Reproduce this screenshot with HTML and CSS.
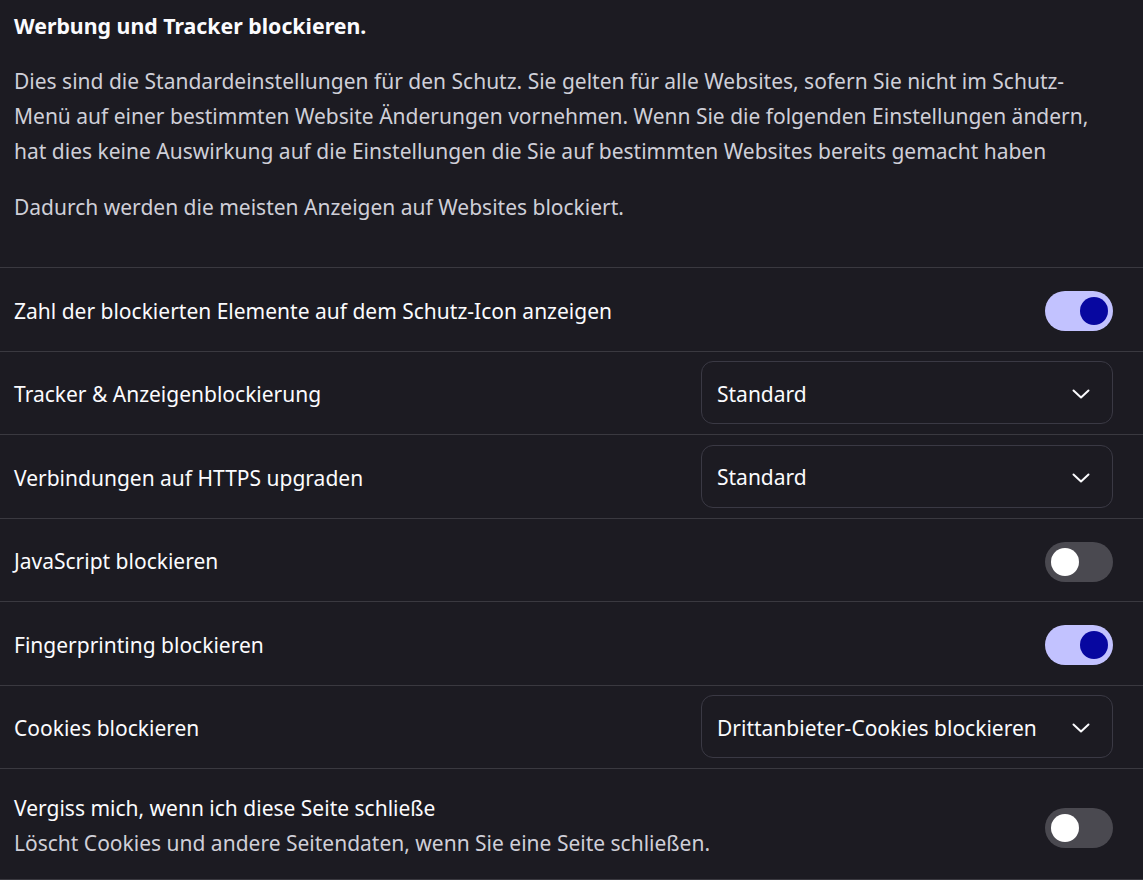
FILE: index.html
```html
<!DOCTYPE html>
<html lang="de">
<head>
<meta charset="utf-8">
<title>Schutz</title>
<link rel="stylesheet" href="styles.css">
</head>
<body>
<section class="intro">
  <h1 class="title">Werbung und Tracker blockieren.</h1>
  <p class="desc">Dies sind die Standardeinstellungen für den Schutz. Sie gelten für alle Websites, sofern Sie nicht im Schutz-<br>Menü auf einer bestimmten Website Änderungen vornehmen. Wenn Sie die folgenden Einstellungen ändern,<br>hat dies keine Auswirkung auf die Einstellungen die Sie auf bestimmten Websites bereits gemacht haben</p>
  <p class="desc">Dadurch werden die meisten Anzeigen auf Websites blockiert.</p>
</section>
<ul class="list">
  <li class="row">
    <span class="label">Zahl der blockierten Elemente auf dem Schutz-Icon anzeigen</span>
    <span class="toggle on"><span class="knob"></span></span>
  </li>
  <li class="row">
    <span class="label">Tracker &amp; Anzeigenblockierung</span>
    <span class="select"><span class="select-text">Standard</span>
      <svg class="chev" width="18" height="10" viewBox="0 0 18 10"><path d="M1.5 1.5 L9 8.5 L16.5 1.5" fill="none" stroke="#fbfbfe" stroke-width="2" stroke-linecap="round" stroke-linejoin="round"/></svg>
    </span>
  </li>
  <li class="row">
    <span class="label">Verbindungen auf HTTPS upgraden</span>
    <span class="select"><span class="select-text">Standard</span>
      <svg class="chev" width="18" height="10" viewBox="0 0 18 10"><path d="M1.5 1.5 L9 8.5 L16.5 1.5" fill="none" stroke="#fbfbfe" stroke-width="2" stroke-linecap="round" stroke-linejoin="round"/></svg>
    </span>
  </li>
  <li class="row">
    <span class="label">JavaScript blockieren</span>
    <span class="toggle"><span class="knob"></span></span>
  </li>
  <li class="row">
    <span class="label">Fingerprinting blockieren</span>
    <span class="toggle on"><span class="knob"></span></span>
  </li>
  <li class="row">
    <span class="label">Cookies blockieren</span>
    <span class="select"><span class="select-text">Drittanbieter-Cookies blockieren</span>
      <svg class="chev" width="18" height="10" viewBox="0 0 18 10"><path d="M1.5 1.5 L9 8.5 L16.5 1.5" fill="none" stroke="#fbfbfe" stroke-width="2" stroke-linecap="round" stroke-linejoin="round"/></svg>
    </span>
  </li>
  <li class="row tall">
    <span class="label-group">
      <span class="label">Vergiss mich, wenn ich diese Seite schließe</span>
      <span class="sub">Löscht Cookies und andere Seitendaten, wenn Sie eine Seite schließen.</span>
    </span>
    <span class="toggle toggle-low"><span class="knob"></span></span>
  </li>
</ul>
</body>
</html>
```

FILE: styles.css
```css
html, body {
  margin: 0;
  padding: 0;
  background: #1c1b22;
}
body {
  font-family: "Noto Sans", "Open Sans", sans-serif;
  font-size: 21px;
  line-height: 35px;
  color: #fbfbfe;
}
.intro {
  padding: 8px 30px 42px 14px;
}
.title {
  margin: 0;
  font-size: 21.3px;
  font-weight: 700;
  line-height: 35px;
}
.desc {
  margin: 21px 0 0 0;
  color: #cfcfd8;
  white-space: nowrap;
}
.list {
  list-style: none;
  margin: 0;
  padding: 0;
  border-bottom: 1px solid #3a3940;
}
.row {
  display: flex;
  align-items: center;
  justify-content: space-between;
  min-height: 83.5px;
  padding: 4px 30px 0 14px;
  border-top: 1px solid #3a3940;
  box-sizing: border-box;
}
.row.tall {
  min-height: 111px;
  padding-top: 22px;
  padding-bottom: 18px;
}
.label-group {
  display: flex;
  flex-direction: column;
}
.sub {
  color: #cfcfd8;
}
.toggle {
  flex: none;
  width: 68px;
  height: 40px;
  border-radius: 20px;
  background: #4a4950;
  display: flex;
  align-items: center;
  padding: 0 6px;
  box-sizing: border-box;
}
.toggle-low {
  margin-top: 4px;
}
.toggle .knob {
  width: 28px;
  height: 28px;
  border-radius: 50%;
  background: #ffffff;
}
.toggle.on {
  background: #c2c2ff;
  justify-content: flex-end;
  padding-right: 5px;
}
.toggle.on .knob {
  background: #0707a0;
}
.select {
  flex: none;
  width: 412px;
  height: 63px;
  margin-top: -4px;
  border: 1px solid #3a3944;
  border-radius: 12px;
  box-sizing: border-box;
  display: flex;
  align-items: center;
  justify-content: space-between;
  padding: 3px 22px 0 15px;
}
.chev {
  display: block;
}
```
